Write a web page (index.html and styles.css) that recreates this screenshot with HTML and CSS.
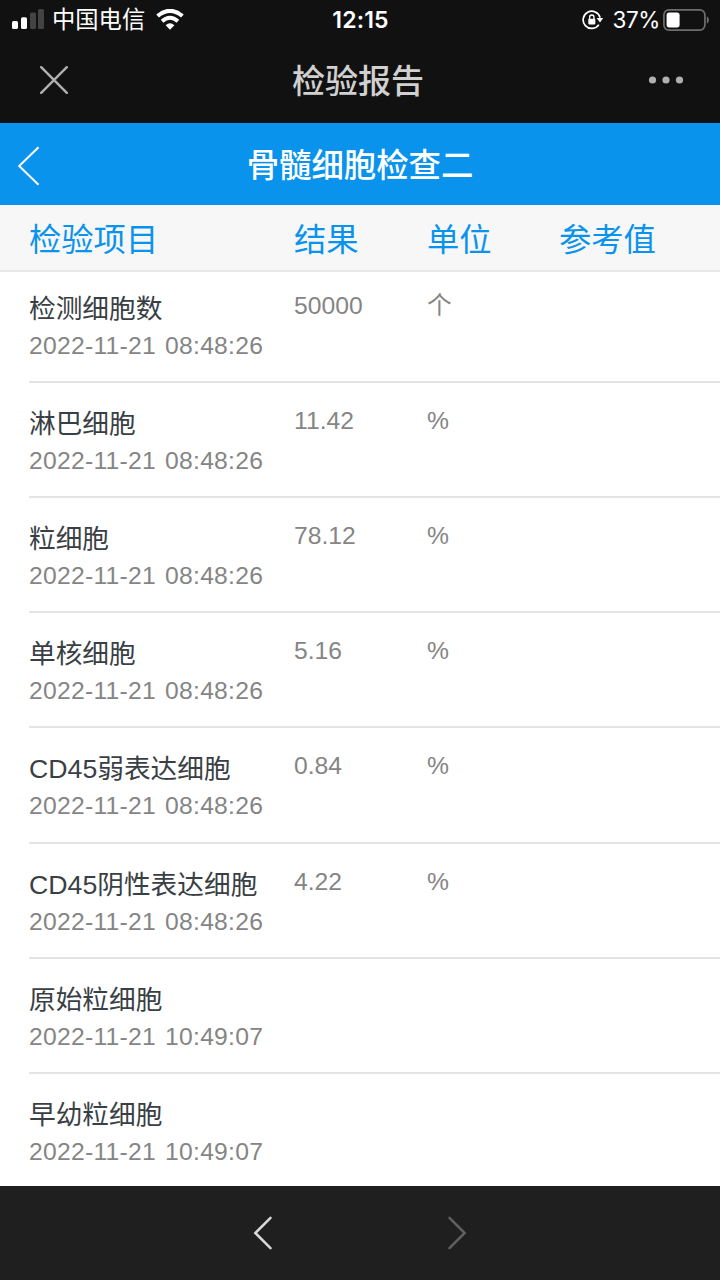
FILE: index.html
```
<!DOCTYPE html>
<html lang="zh-CN">
<head>
  <meta charset="UTF-8">
  <meta name="viewport" content="width=device-width, initial-scale=1.0">
  <title>检验报告</title>
  <link rel="stylesheet" href="styles.css">
</head>
<body>

  <!-- Status bar -->
  <div class="status-bar">
    <div class="status-left">
      <svg class="signal" width="32" height="20" viewBox="0 0 32 20">
        <rect x="0" y="12" width="6" height="8" rx="1.6" fill="#fff"/>
        <rect x="9" y="8.3" width="6" height="11.7" rx="1.6" fill="#fff"/>
        <rect x="18" y="3.5" width="6" height="16.5" rx="1.6" fill="#434343"/>
        <rect x="26" y="0" width="6" height="20" rx="1.6" fill="#434343"/>
      </svg>
      <span class="carrier">中国电信</span>
      <svg class="wifi" width="28" height="21" viewBox="0 0 28 21">
        <path d="M1.6 7 Q14 -3.2 26.4 7" fill="none" stroke="#fff" stroke-width="4.2"/>
        <path d="M6.1 12.2 Q14 5.4 21.9 12.2" fill="none" stroke="#fff" stroke-width="3.9"/>
        <path d="M9.6 16.3 Q14 12.1 18.4 16.3 L14 20.7 Z" fill="#fff"/>
      </svg>
    </div>
    <span class="time">12:15</span>
    <div class="status-right">
      <svg class="lock" width="22" height="20" viewBox="0 0 22 20">
        <path d="M16.9 14.6 A8.6 8.6 0 1 1 18.1 7.8" fill="none" stroke="#fff" stroke-width="1.7"/>
        <path d="M14.6 8 H21.2 L18 12.6 Z" fill="#fff"/>
        <rect x="6.3" y="8.8" width="7" height="5.6" rx="0.8" fill="#fff"/>
        <path d="M7.6 9 V7.2 a2.2 2.2 0 0 1 4.4 0 V9" fill="none" stroke="#fff" stroke-width="1.3"/>
      </svg>
      <span class="percent">37%</span>
      <svg class="battery" width="46" height="22" viewBox="0 0 46 22">
        <rect x="0.9" y="0.9" width="41" height="20.2" rx="5" fill="none" stroke="#6d6d6d" stroke-width="1.7"/>
        <rect x="3.6" y="3.6" width="13" height="14.8" rx="2.6" fill="#fff"/>
        <path d="M43.8 7.3 Q46 8.2 46 11 Q46 13.8 43.8 14.7 Z" fill="#6d6d6d"/>
      </svg>
    </div>
  </div>

  <!-- Browser title -->
  <div class="title-bar">
    <svg class="close" width="28" height="28" viewBox="0 0 28 28">
      <path d="M1.2 1.2 L26.8 26.8 M26.8 1.2 L1.2 26.8" stroke="#b0b0b0" stroke-width="2.4" stroke-linecap="round"/>
    </svg>
    <h1>检验报告</h1>
    <svg class="more" width="36" height="8" viewBox="0 0 36 8">
      <circle cx="4.5" cy="4" r="3.6"/>
      <circle cx="18" cy="4" r="3.6"/>
      <circle cx="31.5" cy="4" r="3.6"/>
    </svg>
  </div>

  <!-- Page header -->
  <header class="header">
    <svg class="back" width="24" height="40" viewBox="0 0 24 40">
      <path d="M21.5 1.2 L2.2 20 L21.5 38.8" fill="none" stroke="#fff" stroke-width="2"/>
    </svg>
    <h2>骨髓细胞检查二</h2>
  </header>

  <div class="row table-head">
    <span>检验项目</span>
    <span>结果</span>
    <span>单位</span>
    <span>参考值</span>
  </div>

  <main class="list">
    <div class="row item">
      <div><p class="name">检测细胞数</p><p class="date">2022-11-21 08:48:26</p></div>
      <span class="value">50000</span>
      <span class="value">个</span>
    </div>
    <div class="row item">
      <div><p class="name">淋巴细胞</p><p class="date">2022-11-21 08:48:26</p></div>
      <span class="value">11.42</span>
      <span class="value">%</span>
    </div>
    <div class="row item">
      <div><p class="name">粒细胞</p><p class="date">2022-11-21 08:48:26</p></div>
      <span class="value">78.12</span>
      <span class="value">%</span>
    </div>
    <div class="row item">
      <div><p class="name">单核细胞</p><p class="date">2022-11-21 08:48:26</p></div>
      <span class="value">5.16</span>
      <span class="value">%</span>
    </div>
    <div class="row item">
      <div><p class="name">CD45弱表达细胞</p><p class="date">2022-11-21 08:48:26</p></div>
      <span class="value">0.84</span>
      <span class="value">%</span>
    </div>
    <div class="row item">
      <div><p class="name">CD45阴性表达细胞</p><p class="date">2022-11-21 08:48:26</p></div>
      <span class="value">4.22</span>
      <span class="value">%</span>
    </div>
    <div class="row item">
      <div><p class="name">原始粒细胞</p><p class="date">2022-11-21 10:49:07</p></div>
    </div>
    <div class="row item">
      <div><p class="name">早幼粒细胞</p><p class="date">2022-11-21 10:49:07</p></div>
    </div>
  </main>

  <!-- Bottom navigation -->
  <nav class="bottom-nav">
    <svg width="20" height="34" viewBox="0 0 20 34">
      <path d="M17.5 1.8 L2.3 17 L17.5 32.2" fill="none" stroke="#d8d8d8" stroke-width="2.5" stroke-linecap="round"/>
    </svg>
    <svg width="20" height="34" viewBox="0 0 20 34">
      <path d="M2.5 1.8 L17.7 17 L2.5 32.2" fill="none" stroke="#606060" stroke-width="2.5" stroke-linecap="round"/>
    </svg>
  </nav>

</body>
</html>
```
FILE: styles.css
```
/* Global Styles */
* {
  margin: 0;
  padding: 0;
  box-sizing: border-box;
}

body {
  display: flex;
  flex-direction: column;
  height: 1280px;
  overflow: hidden;
  background-color: #fff;
  font-family: "Liberation Sans", "Noto Sans CJK SC", sans-serif;
}

svg {
  display: block;
  flex: none;
}

/* Status bar */
.status-bar {
  display: grid;
  grid-template-columns: 1fr auto 1fr;
  align-items: center;
  height: 39px;
  padding: 0 11px 0 12px;
  background-color: #111;
  color: #fff;
  flex: none;
}

.status-left,
.status-right {
  display: flex;
  align-items: center;
}

.status-right {
  justify-content: flex-end;
}

.signal {
  margin-top: -1px;
}

.carrier {
  margin-left: 8px;
  padding-top: 2px;
  font-size: 23.3px;
  line-height: 37px;
}

.wifi {
  margin-left: 11px;
}

.time {
  font-family: Inter, sans-serif;
  font-size: 23px;
  font-weight: 600;
  letter-spacing: 0.2px;
}

.lock {
  margin-right: 8px;
}

.percent {
  margin-right: 3px;
  font-family: Inter, sans-serif;
  font-size: 22.5px;
  letter-spacing: -0.4px;
}

/* Browser title */
.title-bar {
  display: flex;
  align-items: center;
  justify-content: space-between;
  height: 84px;
  padding: 0 36px 2px 40px;
  background-color: #111;
  flex: none;
}

.title-bar h1 {
  padding-top: 3px;
  color: #d0d0d0;
  font-size: 33px;
  font-weight: 500;
  line-height: 79px;
}

.more {
  fill: #b0b0b0;
}

/* Page header */
.header {
  display: grid;
  grid-template-columns: 40px 1fr 40px;
  align-items: center;
  height: 82px;
  padding-top: 3px;
  background-color: #0a93ed;
  flex: none;
}

.back {
  margin-left: 17px;
}

.header h2 {
  padding-top: 2px;
  color: #fff;
  font-size: 32.4px;
  font-weight: 500;
  line-height: 77px;
  text-align: center;
}

/* Result table */
.row {
  display: grid;
  grid-template-columns: 265px 133px 132px 1fr;
}

.table-head {
  height: 67px;
  padding: 3px 0 0 29px;
  background-color: #f7f7f7;
  border-bottom: 2px solid #e7e7e7;
  color: #0a93ed;
  font-size: 32.3px;
  line-height: 65px;
  flex: none;
}

.list {
  flex: 1;
  min-height: 0;
  overflow: hidden;
  margin-top: -4.4px;
  padding-left: 29px;
}

.item {
  height: 115.2px;
  padding-top: 20px;
  border-bottom: 2px solid #e4e4e4;
}

.name {
  padding-top: 1px;
  color: #3a3f45;
  font-size: 26.7px;
  line-height: 40px;
  white-space: nowrap;
}

.date {
  color: #858585;
  font-size: 24.7px;
  line-height: 34px;
  letter-spacing: 0.25px;
  word-spacing: 2px;
  white-space: nowrap;
}

.value {
  color: #858585;
  font-size: 24.7px;
  line-height: 36px;
}

/* Bottom navigation */
.bottom-nav {
  display: flex;
  align-items: center;
  justify-content: center;
  gap: 174px;
  height: 94px;
  background-color: #1f1f1f;
  flex: none;
}
```
